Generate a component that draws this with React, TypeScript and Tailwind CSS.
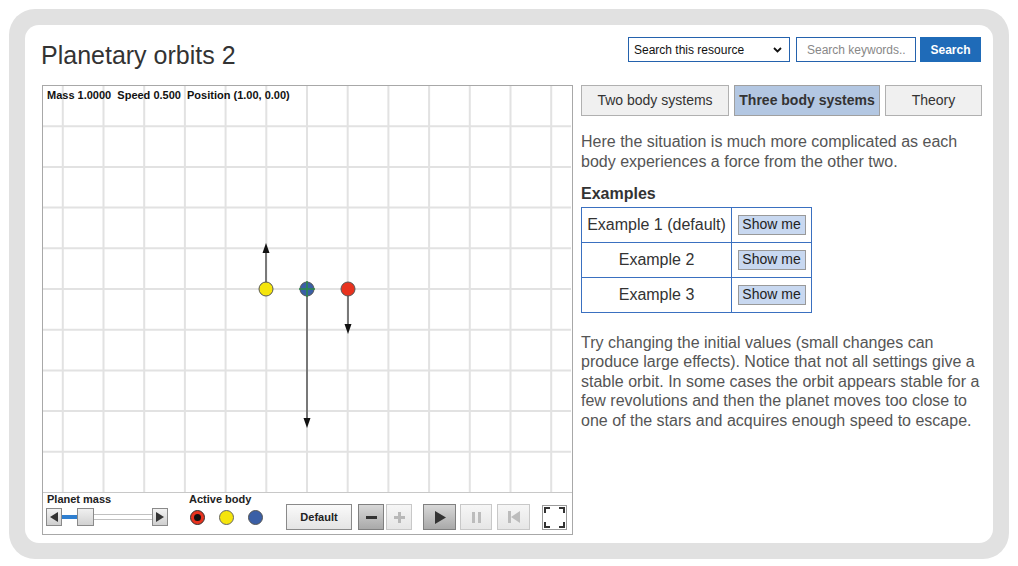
import React from "react";

const FONT = { fontFamily: '"Liberation Sans", Arial, sans-serif' };

function Grid() {
  const W = 528;
  const H = 406;
  const cx = 264;
  const cy = 203;
  const s = 40.7;
  const xs: number[] = [];
  for (let k = -8; k <= 8; k++) {
    const x = cx + k * s;
    if (x > 1 && x < W - 1) xs.push(x);
  }
  const ys: number[] = [];
  for (let k = -8; k <= 8; k++) {
    const y = cy + k * s;
    if (y > 1 && y < H - 1) ys.push(y);
  }
  return (
    <svg width={W} height={H} className="block">
      {xs.map((x) => (
        <line key={"v" + x} x1={x} y1={0} x2={x} y2={H} stroke="#e2e2e2" strokeWidth={2} />
      ))}
      {ys.map((y) => (
        <line key={"h" + y} x1={0} y1={y} x2={W} y2={y} stroke="#e2e2e2" strokeWidth={2} />
      ))}
      <line x1={223} y1={203} x2={223} y2={165} stroke="#555" strokeWidth={1.5} />
      <polygon points="223,157 219.5,167 226.5,167" fill="#111" />
      <line x1={305} y1={203} x2={305} y2={240} stroke="#555" strokeWidth={1.5} />
      <polygon points="305,248 301.5,238 308.5,238" fill="#111" />
      <line x1={264} y1={203} x2={264} y2={334} stroke="#555" strokeWidth={1.5} />
      <polygon points="264,342 260.5,332 267.5,332" fill="#111" />
      <circle cx={223} cy={203} r={7} fill="#f5e50c" stroke="#555" strokeWidth={1} />
      <circle cx={264} cy={203} r={7} fill="#3a5fa6" stroke="#555" strokeWidth={1} />
      <line x1={256} y1={203} x2={272} y2={203} stroke="#2a8a48" strokeWidth={1.5} />
      <line x1={264} y1={195} x2={264} y2={211} stroke="#2a8a48" strokeWidth={1.5} />
      <circle cx={305} cy={203} r={7} fill="#e8321e" stroke="#555" strokeWidth={1} />
    </svg>
  );
}

function ArrowBtn({ dir }: { dir: "l" | "r" }) {
  return (
    <div className="w-[16px] h-[18px] border border-[#8a8a8a] bg-gradient-to-b from-[#f2f2f2] to-[#cfcfcf] flex items-center justify-center">
      <svg width="8" height="10" viewBox="0 0 8 10">
        {dir === "l" ? <polygon points="0,5 8,0 8,10" fill="#333" /> : <polygon points="8,5 0,0 0,10" fill="#333" />}
      </svg>
    </div>
  );
}

function ControlBar() {
  return (
    <div className="h-[41px] border-t border-[#c8c8c8] bg-white flex items-start text-[#222]">
      <div className="ml-[3px] flex flex-col">
        <div className="text-[11px] font-bold leading-[12px] pl-[1px]">Planet mass</div>
        <div className="mt-[3px] flex items-center">
          <ArrowBtn dir="l" />
          <div className="w-[15px] h-[4px] bg-[#2f7fd0]" />
          <div className="w-[17px] h-[18px] border border-[#8a8a8a] bg-gradient-to-b from-[#f0f0f0] to-[#d2d2d2]" />
          <div className="w-[58px] h-[6px] border-y border-[#c0c0c0]" />
          <ArrowBtn dir="r" />
        </div>
      </div>
      <div className="ml-[21px] flex flex-col">
        <div className="text-[11px] font-bold leading-[12px]">Active body</div>
        <div className="mt-[5px] flex items-center gap-[14px] pl-[1px]">
          <div className="w-[15px] h-[15px] rounded-full bg-[#e8321e] border border-[#333] flex items-center justify-center">
            <div className="w-[7px] h-[7px] rounded-full bg-[#111]" />
          </div>
          <div className="w-[15px] h-[15px] rounded-full bg-[#f5e50c] border border-[#666]" />
          <div className="w-[15px] h-[15px] rounded-full bg-[#3a5fa6] border border-[#555]" />
        </div>
      </div>
      <div className="ml-[23px] mt-[11px] w-[66px] h-[26px] border border-[#8a8a8a] bg-gradient-to-b from-[#fafafa] to-[#e4e4e4] flex items-center justify-center text-[11px] font-bold">
        Default
      </div>
      <div className="ml-[6px] mt-[11px] w-[26px] h-[26px] border border-[#808080] bg-gradient-to-b from-[#d8d8d8] to-[#a9a9a9] flex items-center justify-center">
        <div className="w-[11px] h-[3px] bg-[#333]" />
      </div>
      <div className="ml-[2px] mt-[11px] w-[26px] h-[26px] border border-[#c8c8c8] bg-gradient-to-b from-[#f6f6f6] to-[#e6e6e6] flex items-center justify-center relative">
        <div className="w-[11px] h-[3px] bg-[#b8b8b8]" />
        <div className="absolute w-[3px] h-[11px] bg-[#b8b8b8]" />
      </div>
      <div className="ml-[11px] mt-[11px] w-[33px] h-[26px] border border-[#808080] bg-gradient-to-b from-[#d8d8d8] to-[#a9a9a9] flex items-center justify-center">
        <svg width="12" height="13" viewBox="0 0 12 13">
          <polygon points="1,0 12,6.5 1,13" fill="#333" />
        </svg>
      </div>
      <div className="ml-[4px] mt-[11px] w-[32px] h-[26px] border border-[#c8c8c8] bg-gradient-to-b from-[#f6f6f6] to-[#e6e6e6] flex items-center justify-center gap-[3px]">
        <div className="w-[3px] h-[11px] bg-[#bcbcbc]" />
        <div className="w-[3px] h-[11px] bg-[#bcbcbc]" />
      </div>
      <div className="ml-[5px] mt-[11px] w-[33px] h-[26px] border border-[#c8c8c8] bg-gradient-to-b from-[#f6f6f6] to-[#e6e6e6] flex items-center justify-center">
        <svg width="14" height="12" viewBox="0 0 14 12">
          <rect x="1" y="0" width="3" height="12" fill="#bcbcbc" />
          <polygon points="4,6 13,0 13,12" fill="#bcbcbc" />
        </svg>
      </div>
      <div className="ml-[12px] mt-[12px] w-[25px] h-[25px] border border-[#9a9a9a] bg-white flex items-center justify-center">
        <svg width="21" height="21" viewBox="0 0 21 21" fill="none" stroke="#333" strokeWidth="2">
          <polyline points="1,6 1,1 6,1" />
          <polyline points="15,1 20,1 20,6" />
          <polyline points="1,15 1,20 6,20" />
          <polyline points="15,20 20,20 20,15" />
        </svg>
      </div>
    </div>
  );
}

function ShowMe() {
  return (
    <div className="mx-auto w-[68px] h-[20px] border border-[#999] bg-[#c8d8f0] flex items-center justify-center text-[14px] text-[#222]">
      Show me
    </div>
  );
}

export default function App() {
  const rows = ["Example 1 (default)", "Example 2", "Example 3"];
  return (
    <div className="w-[1018px] h-[566px] bg-white p-[9px]" style={FONT}>
      <div className="w-[1000px] h-[550px] rounded-[26px] bg-[#e1e1e1] p-4">
        <div className="w-[968px] h-[518px] rounded-[14px] bg-white pt-[12px] pl-[17px] pr-[11px]">
          <div className="h-[48px] flex justify-between items-start">
            <h1 className="mt-[3px] text-[25px] leading-[30px] text-[#333] -ml-[1px]">Planetary orbits 2</h1>
            <div className="flex items-center mr-[1px]">
              <div className="w-[162px] h-[25px] border border-[#2462ad] flex items-center justify-between pl-[5px] pr-[7px] text-[12px] text-[#111]">
                <span>Search this resource</span>
                <svg width="9" height="6" viewBox="0 0 9 6" fill="none" stroke="#111" strokeWidth="1.8">
                  <polyline points="1,1 4.5,4.5 8,1" />
                </svg>
              </div>
              <div className="ml-[6px] w-[120px] h-[25px] border border-[#2462ad] flex items-center pl-[10px] text-[12px] text-[#888]">
                Search keywords..
              </div>
              <div className="ml-[4px] w-[61px] h-[25px] bg-[#1f6bb8] flex items-center justify-center text-[12px] font-bold text-white">
                Search
              </div>
            </div>
          </div>
          <div className="flex items-start">
            <div className="w-[531px] h-[450px] border border-[#a8a8a8] relative flex flex-col">
              <Grid />
              <ControlBar />
              <div className="absolute left-[4px] top-[3px] text-[11px] font-bold text-[#111] leading-[13px] whitespace-pre">
                {"Mass 1.0000  Speed 0.500  Position (1.00, 0.00)"}
              </div>
            </div>
            <div className="ml-[8px] w-[401px] flex flex-col">
              <div className="flex gap-[5px]">
                <div className="w-[148px] h-[31px] border border-[#b0b0b0] bg-[#f0f0f0] flex items-center justify-center text-[14px] text-[#333]">
                  Two body systems
                </div>
                <div className="w-[146px] h-[31px] border border-[#a0a0a0] bg-[#b3c7e2] flex items-center justify-center text-[14px] font-bold text-[#333]">
                  Three body systems
                </div>
                <div className="w-[97px] h-[31px] border border-[#b0b0b0] bg-[#f0f0f0] flex items-center justify-center text-[14px] text-[#333]">
                  Theory
                </div>
              </div>
              <p className="mt-[16px] text-[16px] leading-[19.5px] text-[#555]">
                Here the situation is much more complicated as each body experiences a force from the other two.
              </p>
              <div className="mt-[13px] text-[16px] leading-[19.5px] font-bold text-[#333]">Examples</div>
              <table className="mt-[3px] self-start w-[230px] table-fixed border-collapse text-[16px] text-[#333]">
                <tbody>
                  {rows.map((r) => (
                    <tr key={r} className="h-[35px]">
                      <td className="w-[150px] border border-[#3a70c0] text-center p-0 whitespace-nowrap">{r}</td>
                      <td className="w-[80px] border border-[#3a70c0] p-0">
                        <ShowMe />
                      </td>
                    </tr>
                  ))}
                </tbody>
              </table>
              <p className="mt-[20px] text-[16px] leading-[19.5px] text-[#555]">
                Try changing the initial values (small changes can produce large effects). Notice that not all settings give a stable orbit. In some cases the orbit appears stable for a few revolutions and then the planet moves too close to one of the stars and acquires enough speed to escape.
              </p>
            </div>
          </div>
        </div>
      </div>
    </div>
  );
}
